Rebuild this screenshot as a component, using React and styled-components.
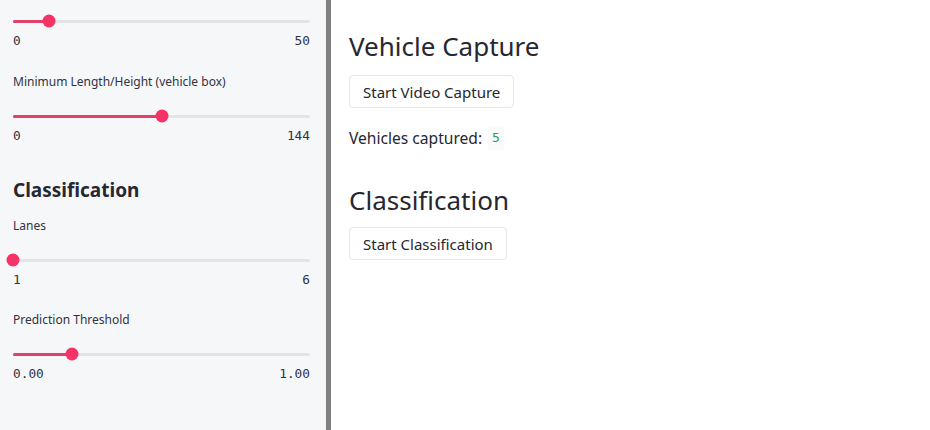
import React from 'react';
import styled, { createGlobalStyle } from 'styled-components';

const GlobalStyle = createGlobalStyle`
  html, body {
    margin: 0;
    padding: 0;
    background: #ffffff;
  }
  #root {
    height: 430px;
  }
  * {
    box-sizing: border-box;
  }
`;

const Page = styled.div`
  display: flex;
  height: 430px;
  overflow: hidden;
  font-family: "Noto Sans", "Open Sans", sans-serif;
  color: #262730;
`;

const Sidebar = styled.aside`
  width: 326px;
  flex-shrink: 0;
  background: #f6f7f9;
  padding: 11px 16px 0 13px;
  display: flex;
  flex-direction: column;
`;

const Divider = styled.div`
  width: 5px;
  flex-shrink: 0;
  background: #808080;
`;

const Main = styled.main`
  flex: 1;
  padding: 29px 18px 0 18px;
  display: flex;
  flex-direction: column;
  align-items: flex-start;
`;

const SliderBlock = styled.div`
  display: flex;
  flex-direction: column;
  margin-bottom: ${({ gap }) => gap}px;
`;

const SliderLabel = styled.label`
  font-size: 12px;
  line-height: 20px;
  height: 20px;
  color: #31333f;
  margin-bottom: 14px;
`;

const TrackArea = styled.div`
  position: relative;
  height: 20px;
  display: flex;
  align-items: center;
`;

const Track = styled.div`
  position: relative;
  width: 100%;
  height: 3px;
  border-radius: 2px;
  background: #e4e4e6;
`;

const Fill = styled.div`
  position: absolute;
  left: 0;
  top: 0;
  bottom: 0;
  border-radius: 2px;
  background: #e23f69;
`;

const Thumb = styled.div`
  position: absolute;
  top: 50%;
  width: 13px;
  height: 13px;
  border-radius: 50%;
  background: #f63366;
  transform: translate(-50%, -50%);
`;

const Ticks = styled.div`
  display: flex;
  justify-content: space-between;
  padding-top: 1px;
  font-family: "DejaVu Sans Mono", "Liberation Mono", monospace;
  font-size: 12.8px;
  line-height: 18px;
  color: #31333f;
`;

const SideHeading = styled.h2`
  margin: 0 0 13px 0;
  font-size: 19px;
  font-weight: 700;
  line-height: 26px;
  color: #262730;
`;

const Heading = styled.h1`
  margin: 0;
  font-size: 26px;
  font-weight: 400;
  line-height: 34px;
  color: #262730;
  margin-top: ${({ top }) => top}px;
`;

const Button = styled.button`
  margin-top: ${({ top }) => top}px;
  height: 33px;
  padding: 0 13px;
  background: #ffffff;
  border: 1px solid #e6e6ea;
  border-radius: 4px;
  font-family: "Noto Sans", "Open Sans", sans-serif;
  font-size: 15px;
  color: #262730;
  cursor: pointer;
`;

const Stat = styled.p`
  margin: 18px 0 0 0;
  font-size: 15.6px;
  line-height: 22px;
  display: flex;
  align-items: center;
  gap: 6px;
`;

const Code = styled.code`
  font-family: "DejaVu Sans Mono", "Liberation Mono", monospace;
  font-size: 13px;
  color: #2e9e4a;
  background: #fafafa;
  padding: 1px 4px;
  border-radius: 3px;
`;

const Slider = ({ label, min, max, value, gap = 20 }) => {
  const pct = ((value - min) / (max - min)) * 100;
  return (
    <SliderBlock gap={gap}>
      {label && <SliderLabel>{label}</SliderLabel>}
      <TrackArea>
        <Track>
          <Fill style={{ width: `${pct}%` }} />
          <Thumb style={{ left: `${pct}%` }} />
        </Track>
      </TrackArea>
      <Ticks>
        <span>{min}</span>
        <span>{max}</span>
      </Ticks>
    </SliderBlock>
  );
};

const App = () => {
  return (
    <>
      <GlobalStyle />
      <Page>
        <Sidebar>
          <Slider min="0" max="50" value={6} gap={22} />
          <Slider label="Minimum Length/Height (vehicle box)" min="0" max="144" value={72} gap={32} />
          <SideHeading>Classification</SideHeading>
          <Slider label="Lanes" min="1" max="6" value={1} gap={21} />
          <Slider label="Prediction Threshold" min="0.00" max="1.00" value={0.2} gap={0} />
        </Sidebar>
        <Divider />
        <Main>
          <Heading top={0}>Vehicle Capture</Heading>
          <Button top={12}>Start Video Capture</Button>
          <Stat>
            Vehicles captured: <Code>5</Code>
          </Stat>
          <Heading top={33}>Classification</Heading>
          <Button top={10}>Start Classification</Button>
        </Main>
      </Page>
    </>
  );
};

export default App;
